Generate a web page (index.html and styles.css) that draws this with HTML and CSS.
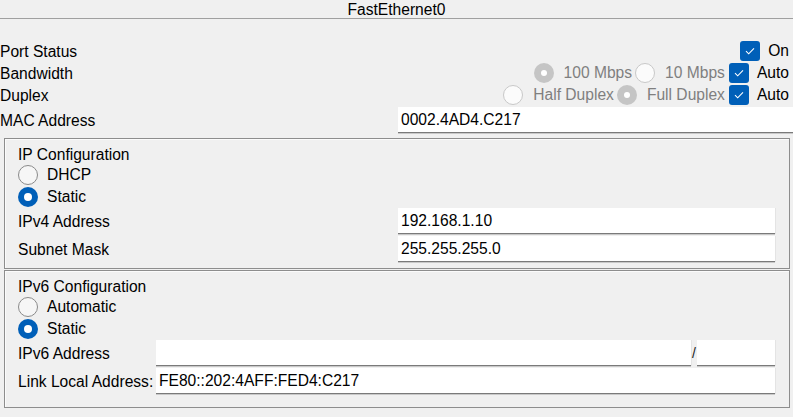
FILE: index.html
```html
<!DOCTYPE html>
<html>
<head>
<meta charset="utf-8">
<link rel="stylesheet" href="styles.css">
</head>
<body>
<div class="header">FastEthernet0</div>

<div class="top">
  <div class="row">
    <span class="label">Port Status</span>
    <div class="controls">
      <span class="check"><svg viewBox="0 0 20 20" width="20" height="20"><path d="M6 10.2 L8.7 12.8 L14 7.4" fill="none" stroke="#fff" stroke-width="1.1"/></svg></span>
      <span class="ctext">On</span>
    </div>
  </div>
  <div class="row">
    <span class="label">Bandwidth</span>
    <div class="controls">
      <span class="radio dis-on"></span><span class="rtext dis">100 Mbps</span>
      <span class="radio dis-off"></span><span class="rtext dis">10 Mbps</span>
      <span class="check"><svg viewBox="0 0 20 20" width="20" height="20"><path d="M6 10.2 L8.7 12.8 L14 7.4" fill="none" stroke="#fff" stroke-width="1.1"/></svg></span>
      <span class="ctext">Auto</span>
    </div>
  </div>
  <div class="row">
    <span class="label">Duplex</span>
    <div class="controls">
      <span class="radio dis-off"></span><span class="rtext dis">Half Duplex</span>
      <span class="radio dis-on"></span><span class="rtext dis">Full Duplex</span>
      <span class="check"><svg viewBox="0 0 20 20" width="20" height="20"><path d="M6 10.2 L8.7 12.8 L14 7.4" fill="none" stroke="#fff" stroke-width="1.1"/></svg></span>
      <span class="ctext">Auto</span>
    </div>
  </div>
  <div class="mac-row">
    <span class="label">MAC Address</span>
    <div class="field mac">0002.4AD4.C217</div>
  </div>
</div>

<div class="box ipv4">
  <div class="title">IP Configuration</div>
  <div class="opt"><span class="radio off"></span><span class="otext">DHCP</span></div>
  <div class="opt"><span class="radio on"></span><span class="otext">Static</span></div>
  <div class="frow v4">
    <span class="label">IPv4 Address</span>
    <div class="field">192.168.1.10</div>
  </div>
  <div class="frow v4">
    <span class="label">Subnet Mask</span>
    <div class="field">255.255.255.0</div>
  </div>
</div>

<div class="box ipv6">
  <div class="title">IPv6 Configuration</div>
  <div class="opt"><span class="radio off"></span><span class="otext">Automatic</span></div>
  <div class="opt"><span class="radio on"></span><span class="otext">Static</span></div>
  <div class="frow v6">
    <span class="label">IPv6 Address</span>
    <div class="field"></div>
    <span class="slash">/</span>
    <div class="field"></div>
  </div>
  <div class="frow v6b">
    <span class="label">Link Local Address:</span>
    <div class="field">FE80::202:4AFF:FED4:C217</div>
  </div>
</div>
</body>
</html>
```
FILE: styles.css
```css
* { box-sizing: border-box; }
html, body { margin: 0; padding: 0; }
body {
  width: 793px;
  height: 417px;
  background: #f0f0f0;
  font-family: "Liberation Sans", Arial, sans-serif;
  font-size: 15.6px;
  color: #000;
  overflow: hidden;
}
.header {
  height: 19px;
  line-height: 19px;
  text-align: center;
  border-bottom: 1px solid #a0a0a0;
}
.top {
  margin-top: 21px;
}
.row {
  height: 22px;
  display: flex;
  align-items: center;
  justify-content: space-between;
  padding-right: 4px;
}
.controls {
  display: flex;
  align-items: center;
}
.check {
  width: 20px;
  height: 20px;
  border-radius: 3px;
  background: #005fb8;
  display: inline-block;
  margin-left: 4px;
}
.check svg { display: block; }
.ctext { margin-left: 8px; }
.radio {
  width: 20px;
  height: 20px;
  border-radius: 50%;
  display: inline-block;
  position: relative;
  flex: none;
}
.radio.off {
  background: #f6f6f6;
  border: 1px solid #8a8a8a;
}
.radio.on {
  background: #005fb8;
}
.radio.on::after {
  content: "";
  position: absolute;
  left: 6px; top: 6px;
  width: 8px; height: 8px;
  border-radius: 50%;
  background: #fff;
}
.radio.dis-off {
  background: #fbfbfb;
  border: 1px solid #c8c8c8;
  margin-left: 3px;
}
.radio.dis-on {
  background: #c5c5c5;
  margin-left: 3px;
}
.radio.dis-on::after {
  content: "";
  position: absolute;
  left: 7px; top: 7px;
  width: 6px; height: 6px;
  border-radius: 50%;
  background: #fff;
}
.rtext { margin-left: 10px; }
.dis { color: #7f7f7f; }
.mac-row {
  margin-top: 1px;
  height: 26px;
  display: grid;
  grid-template-columns: 398px 1fr;
  align-items: center;
}
.field {
  height: 26px;
  background: #fff;
  border-bottom: 1px solid #7a7a7a;
  box-shadow: 0 1px 0 #c9c9c9, 1px 0 0 #e4e4e4;
  padding-left: 3px;
  line-height: 26px;
  white-space: nowrap;
  overflow: hidden;
}
.box {
  margin: 0 4px;
  width: 786px;
  border: 1px solid #8d8d8d;
  box-shadow: inset 1px 1px 0 #fbfbfb;
  padding: 5px 13px 6px 13px;
}
.ipv4 { margin-top: 5px; }
.ipv6 { margin-top: 1px; padding-bottom: 13px; }
.title {
  height: 20px;
  line-height: 21px;
}
.opt {
  height: 22px;
  display: flex;
  align-items: center;
}
.otext { margin-left: 9px; }
.frow {
  height: 26px;
  display: grid;
  align-items: center;
  margin-bottom: 2px;
}
.frow:last-child { margin-bottom: 0; }
.label { white-space: nowrap; padding-top: 1px; }
.v4 { grid-template-columns: 380px 377px; }
.v6 { grid-template-columns: 138px 535px 6px 78px; }
.v6b { grid-template-columns: 138px 619px; }
.slash {
  font-size: 14px;
  color: #1a1a1a;
  padding-left: 1px;
}
```
